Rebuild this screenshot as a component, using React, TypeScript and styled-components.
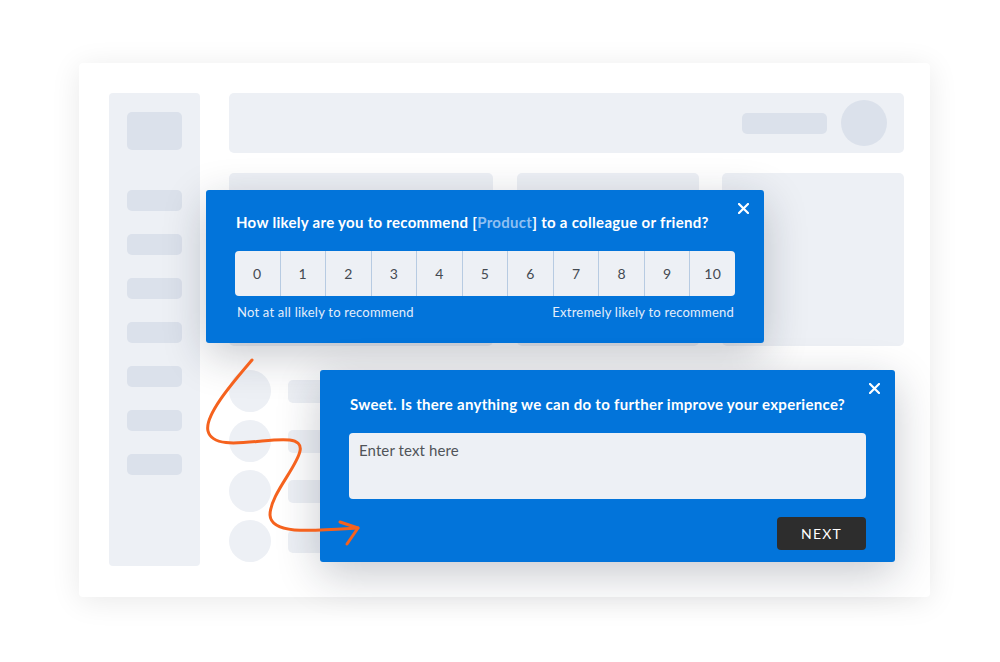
import React from "react";
import styled, { createGlobalStyle } from "styled-components";

const GlobalStyle = createGlobalStyle`
  html, body {
    margin: 0;
    padding: 0;
    background: #ffffff;
    font-family: "Lato", "Open Sans", sans-serif;
  }
`;

const Page = styled.div`
  width: 1000px;
  height: 662px;
  padding: 63px 0 0 79px;
  box-sizing: border-box;
  overflow: hidden;
`;

const Frame = styled.div`
  position: relative;
  width: 851px;
  height: 534px;
  box-sizing: border-box;
  padding: 30px 26px 31px 30px;
  background: #ffffff;
  border-radius: 4px;
  box-shadow: 0 4px 30px rgba(0, 0, 0, 0.09);
  display: flex;
  gap: 29px;
`;

const Sidebar = styled.div`
  width: 91px;
  flex-shrink: 0;
  background: #edf0f5;
  border-radius: 4px;
  padding: 19px 18px;
  box-sizing: border-box;
  display: flex;
  flex-direction: column;
  gap: 23px;
`;

const SideLogo = styled.div`
  width: 55px;
  height: 38px;
  border-radius: 5px;
  background: #dbe1eb;
  margin-bottom: 17px;
`;

const SideItem = styled.div`
  width: 55px;
  height: 21px;
  border-radius: 5px;
  background: #dbe1eb;
`;

const Main = styled.div`
  flex: 1;
  display: flex;
  flex-direction: column;
`;

const Header = styled.div`
  height: 60px;
  background: #edf0f5;
  border-radius: 5px;
  display: flex;
  align-items: center;
  justify-content: flex-end;
  gap: 14px;
  padding-right: 17px;
`;

const HeaderPill = styled.div`
  width: 85px;
  height: 21px;
  border-radius: 5px;
  background: #dbe1eb;
`;

const Avatar = styled.div<{ $size: number; $tone?: string }>`
  width: ${(p) => p.$size}px;
  height: ${(p) => p.$size}px;
  border-radius: 50%;
  background: ${(p) => p.$tone || "#dbe1eb"};
  flex-shrink: 0;
`;

const CardRow = styled.div`
  margin-top: 20px;
  height: 173px;
  display: grid;
  grid-template-columns: 264px 182px 182px;
  justify-content: space-between;
`;

const Card = styled.div`
  background: #edf0f5;
  border-radius: 5px;
`;

const List = styled.div`
  margin-top: 24px;
  display: flex;
  flex-direction: column;
  gap: 8px;
`;

const ListRow = styled.div`
  display: flex;
  align-items: center;
  gap: 17px;
`;

const ListBar = styled.div`
  width: 200px;
  height: 23px;
  border-radius: 5px;
  background: #edf0f5;
`;

const Popup = styled.div<{ $left: number; $top: number; $width: number; $height: number }>`
  position: absolute;
  left: ${(p) => p.$left}px;
  top: ${(p) => p.$top}px;
  width: ${(p) => p.$width}px;
  height: ${(p) => p.$height}px;
  box-sizing: border-box;
  background: #0274da;
  border-radius: 3px;
  box-shadow: 0 12px 44px rgba(20, 30, 50, 0.24);
  color: #ffffff;
  padding: 0 29px;
  display: flex;
  flex-direction: column;
`;

const Close = styled.button`
  position: absolute;
  top: 12px;
  right: 15px;
  width: 12px;
  height: 12px;
  padding: 0;
  border: none;
  background: none;
  display: flex;
  align-items: center;
  justify-content: center;
  svg {
    display: block;
  }
`;

const Question = styled.div<{ $top: number }>`
  margin-top: ${(p) => p.$top}px;
  font-size: 15px;
  line-height: 20px;
  font-weight: 700;
  letter-spacing: 0.3px;
  padding-left: 1px;
  white-space: nowrap;
`;

const Highlight = styled.span`
  color: #8fc0f2;
`;

const Scale = styled.div`
  margin-top: 19px;
  height: 45px;
  display: flex;
  background: #edf0f5;
  border-radius: 4px;
  overflow: hidden;
`;

const ScaleCell = styled.div`
  flex: 1;
  display: flex;
  align-items: center;
  justify-content: center;
  color: #444a52;
  font-size: 14px;
  letter-spacing: 0.3px;
  & + & {
    border-left: 1px solid #b7cbe2;
  }
`;

const ScaleLabels = styled.div`
  margin-top: 8px;
  display: flex;
  justify-content: space-between;
  font-size: 13px;
  line-height: 17px;
  letter-spacing: 0.22px;
  color: #e4eefa;
  padding: 0 1px 0 2px;
`;

const TextBox = styled.div`
  margin-top: 19px;
  height: 66px;
  box-sizing: border-box;
  background: #edf0f5;
  border-radius: 4px;
  padding: 8px 10px;
  font-size: 15px;
  line-height: 19px;
  letter-spacing: 0.1px;
  color: #505459;
`;

const Footer = styled.div`
  margin-top: 18px;
  display: flex;
  justify-content: flex-end;
`;

const NextButton = styled.button`
  width: 89px;
  height: 33px;
  border: none;
  border-radius: 4px;
  background: #2d2d2d;
  color: #ffffff;
  font-family: "Lato", "Open Sans", sans-serif;
  font-size: 14px;
  letter-spacing: 1.2px;
`;

const Squiggle = styled.svg`
  position: absolute;
  left: 121px;
  top: 292px;
  overflow: visible;
`;

const CloseIcon = () => (
  <svg width="11" height="11" viewBox="0 0 11 11">
    <path d="M1 1 L10 10 M10 1 L1 10" stroke="#fff" strokeWidth="2.2" strokeLinecap="round" />
  </svg>
);

const sideItems = [0, 1, 2, 3, 4, 5, 6];
const rows = [0, 1, 2, 3];
const scores = [0, 1, 2, 3, 4, 5, 6, 7, 8, 9, 10];

export default function App() {
  return (
    <>
      <GlobalStyle />
      <Page>
        <Frame>
          <Sidebar>
            <SideLogo />
            {sideItems.map((i) => (
              <SideItem key={i} />
            ))}
          </Sidebar>
          <Main>
            <Header>
              <HeaderPill />
              <Avatar $size={46} />
            </Header>
            <CardRow>
              <Card />
              <Card />
              <Card />
            </CardRow>
            <List>
              {rows.map((i) => (
                <ListRow key={i}>
                  <Avatar $size={42} $tone="#edf0f5" />
                  <ListBar />
                </ListRow>
              ))}
            </List>
          </Main>

          <Popup $left={127} $top={127} $width={558} $height={153}>
            <Close aria-label="close">
              <CloseIcon />
            </Close>
            <Question $top={22}>
              How likely are you to recommend [<Highlight>Product</Highlight>] to a colleague or friend?
            </Question>
            <Scale>
              {scores.map((n) => (
                <ScaleCell key={n}>{n}</ScaleCell>
              ))}
            </Scale>
            <ScaleLabels>
              <span>Not at all likely to recommend</span>
              <span>Extremely likely to recommend</span>
            </ScaleLabels>
          </Popup>

          <Popup $left={241} $top={307} $width={575} $height={192}>
            <Close aria-label="close">
              <CloseIcon />
            </Close>
            <Question $top={24}>
              Sweet. Is there anything we can do to further improve your experience?
            </Question>
            <TextBox>Enter text here</TextBox>
            <Footer>
              <NextButton>NEXT</NextButton>
            </Footer>
          </Popup>

          <Squiggle width="170" height="200" viewBox="0 0 170 200">
            <path
              d="M52 5 C 35 25, 4 60, 8 76 C 12 92, 40 88, 62 86 C 82 84, 103 82, 100 96 C 97 112, 70 140, 70 160 C 71 180, 112 176, 158 173"
              fill="none"
              stroke="#f5621e"
              strokeWidth="3"
              strokeLinecap="round"
              strokeLinejoin="round"
            />
            <path
              d="M140 167 L158 173 L147 189"
              fill="none"
              stroke="#f5621e"
              strokeWidth="3"
              strokeLinecap="round"
              strokeLinejoin="round"
            />
          </Squiggle>
        </Frame>
      </Page>
    </>
  );
}
